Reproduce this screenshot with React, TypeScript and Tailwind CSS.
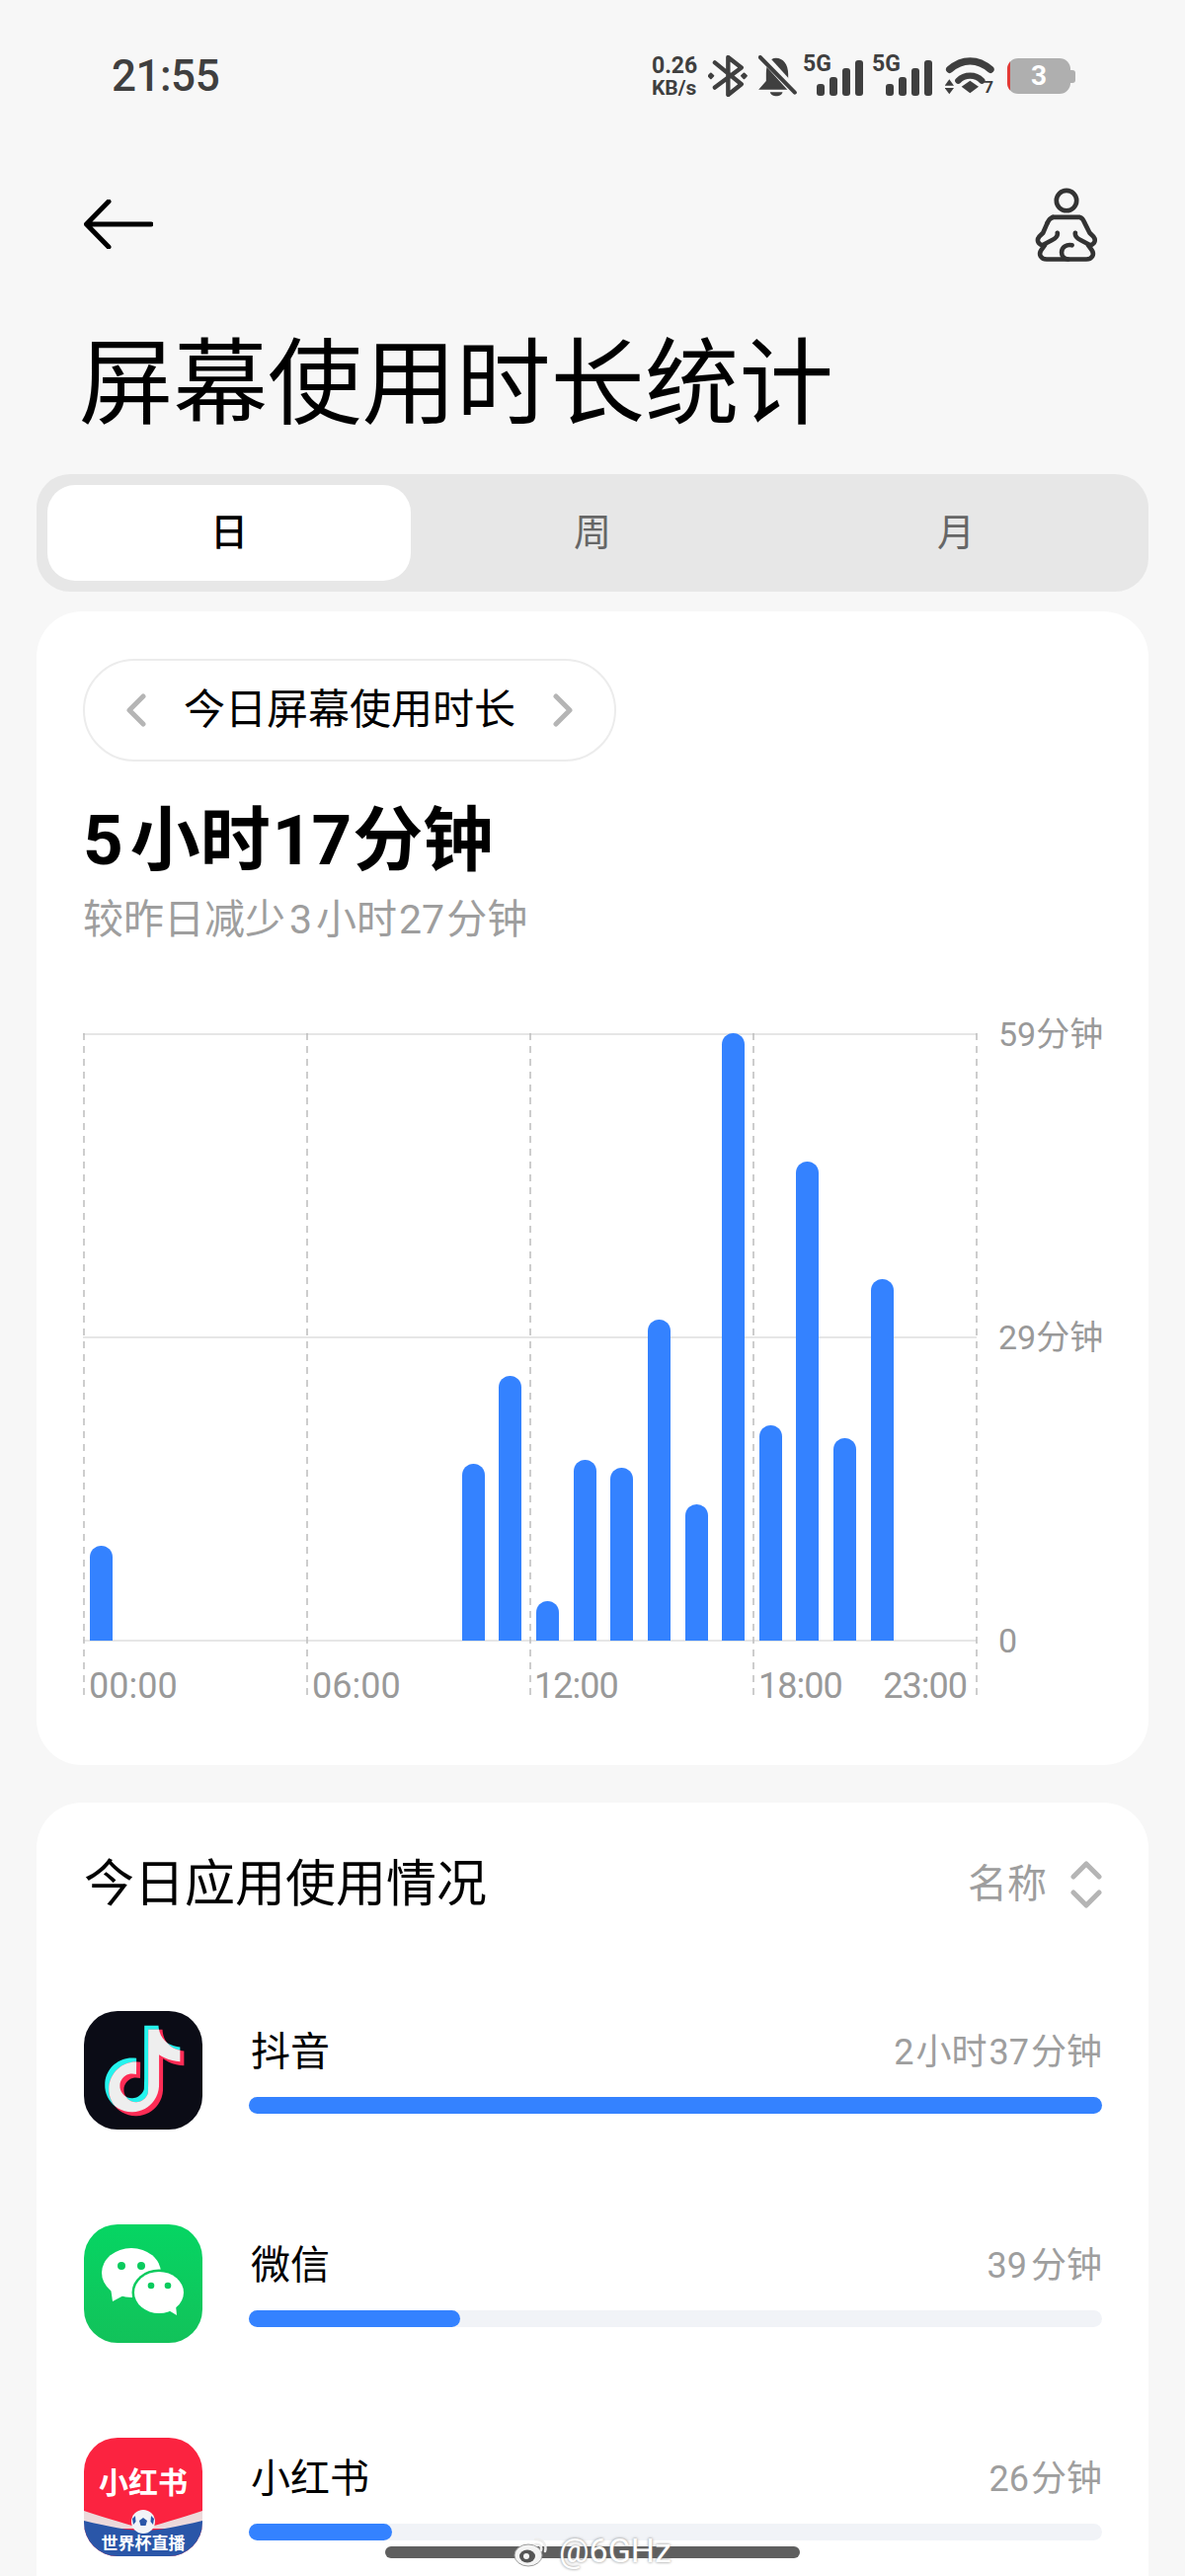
const hourHeights = [96, 0, 0, 0, 0, 0, 0, 0, 0, 0, 179, 268, 40, 183, 175, 325, 138, 615, 218, 485, 205, 366, 0, 0];

const TIKTOK =
  "M12.525.02c1.31-.02 2.61-.01 3.91-.02.08 1.53.63 3.09 1.75 4.17 1.12 1.11 2.7 1.62 4.24 1.79v4.03c-1.44-.05-2.89-.35-4.2-.97-.57-.26-1.1-.59-1.62-.93-.01 2.92.01 5.84-.02 8.75-.08 1.4-.54 2.79-1.35 3.94-1.31 1.92-3.58 3.17-5.91 3.21-1.43.08-2.86-.31-4.08-1.03-2.02-1.19-3.44-3.37-3.65-5.71-.02-.5-.03-1-.01-1.49.18-1.9 1.12-3.72 2.58-4.96 1.66-1.44 3.98-2.13 6.15-1.72.02 1.48-.04 2.96-.04 4.44-.99-.32-2.15-.23-3.02.37-.63.41-1.11 1.04-1.36 1.75-.21.51-.15 1.07-.14 1.61.24 1.64 1.82 3.02 3.5 2.87 1.12-.01 2.19-.66 2.77-1.61.19-.33.4-.67.41-1.06.1-1.79.06-3.57.07-5.36.01-4.03-.01-8.05.02-12.07z";

function Signal() {
  return (
    <div className="flex items-end gap-[5px] h-[36px] ml-[2px]">
      <div className="w-[8px] h-[12px] rounded-[3px] bg-[#3f3f3f]" />
      <div className="w-[8px] h-[19px] rounded-[3px] bg-[#3f3f3f]" />
      <div className="w-[8px] h-[28px] rounded-[3px] bg-[#3f3f3f]" />
      <div className="w-[8px] h-[36px] rounded-[3px] bg-[#3f3f3f]" />
    </div>
  );
}

function Net5G({ className }: { className: string }) {
  return (
    <div className={`relative w-[61px] h-[41px] ${className}`}>
      <div className="absolute left-0 top-[1px] text-[23px] leading-[16px] font-bold text-[#3f3f3f]">5G</div>
      <div className="absolute right-0 bottom-0">
        <Signal />
      </div>
    </div>
  );
}

function StatusBar() {
  return (
    <div className="flex items-center h-[90px] pl-[113px]">
      <div className="text-[44px] leading-[44px] font-medium text-[#3f3f3f] tracking-[-0.5px]">21:55</div>
      <div className="flex items-center ml-auto mr-[111px]">
        <div className="font-bold text-[#3f3f3f] w-[47px]">
          <div className="text-[23px] leading-[23px]">0.26</div>
          <div className="text-[21px] leading-[22px]">KB/s</div>
        </div>
        <svg className="ml-[10px]" width="40" height="42" viewBox="352 78 118 125" fill="none">
          <path d="M372 100L452 165L412 197V84L452 115L372 175" stroke="#3f3f3f" strokeWidth="13" strokeLinejoin="round" strokeLinecap="round" />
          <rect x="352" y="132" width="16" height="16" rx="3" transform="rotate(45 360 140)" fill="#3f3f3f" />
          <rect x="452" y="132" width="16" height="16" rx="3" transform="rotate(45 460 140)" fill="#3f3f3f" />
        </svg>
        <svg className="ml-[11px]" width="39" height="42" viewBox="505 72 116 126" fill="none">
          <path d="M558 80C580 80 595 100 595 128V150L612 176H505L528 150V128C528 100 538 80 558 80Z" fill="#3f3f3f" />
          <path d="M540 184H578C575 200 543 200 540 184Z" fill="#3f3f3f" />
          <path d="M510 66L624 192" stroke="#f7f7f7" strokeWidth="26" />
          <path d="M510 78L615 185" stroke="#3f3f3f" strokeWidth="12" strokeLinecap="round" />
        </svg>
        <Net5G className="ml-[6px] -mt-[1px]" />
        <Net5G className="ml-[9px] -mt-[1px]" />
        <div className="relative w-[50px] h-[38px] ml-[13px]">
          <svg className="absolute left-0 top-0" width="50" height="38" viewBox="1070 85 150 114" fill="none">
            <path d="M1084 122C1122 88 1170 88 1208 122" stroke="#3f3f3f" strokeWidth="22" strokeLinecap="round" />
            <path d="M1110 156C1130 136 1162 136 1182 156" stroke="#3f3f3f" strokeWidth="19" strokeLinecap="round" />
            <path d="M1146 156L1172 174L1146 194L1120 174Z" fill="#3f3f3f" />
            <path d="M1083 152L1097 171H1069Z" fill="#3f3f3f" />
            <path d="M1083 197L1097 178H1069Z" fill="#3f3f3f" />
          </svg>
          <span className="absolute right-[1px] -bottom-[1px] text-[17px] leading-[17px] font-bold text-[#3f3f3f]">7</span>
        </div>
        <div className="flex items-center ml-[13px]">
          <div className="relative w-[64px] h-[36px] rounded-[11px] bg-[#afafaf] overflow-hidden flex items-center justify-center">
            <div className="absolute left-0 top-0 bottom-0 w-[3px] bg-[#e53935]" />
            <span className="text-[28px] leading-[36px] font-bold text-white">3</span>
          </div>
          <div className="w-[5px] h-[13px] rounded-r-[3px] bg-[#afafaf]" />
        </div>
      </div>
    </div>
  );
}

function Header() {
  return (
    <div className="flex items-center justify-between h-[76px] mt-[67px] pl-[85px] pr-[88px]">
      <svg width="70" height="50" viewBox="0 0 70 50" fill="none">
        <path d="M68 25H3M25 2L2.5 25L25 48" stroke="#000" strokeWidth="5" strokeLinecap="round" strokeLinejoin="round" />
      </svg>
      <svg width="64" height="75" viewBox="1342 478 194 226" fill="none" stroke="#333" strokeWidth="14" strokeLinecap="round" strokeLinejoin="round">
        <circle cx="1439" cy="517" r="31" />
        <path d="M1397 568H1480C1488 570 1492 578 1495 586L1510 616L1522 628C1530 638 1526 650 1512 654L1482 638C1470 632 1464 626 1466 616" />
        <path d="M1380 586C1384 576 1390 570 1397 568" />
        <path d="M1380 586L1367 616L1355 628C1347 638 1351 650 1365 654L1395 638C1407 632 1413 626 1411 616" />
        <path d="M1372 654L1362 668C1352 682 1360 697 1378 697H1500C1518 697 1526 682 1516 668L1506 654" />
        <path d="M1456 654C1440 650 1424 660 1424 676C1424 688 1432 696 1444 697" />
      </svg>
    </div>
  );
}

function Tabs() {
  return (
    <div className="flex mx-[37px] mt-[36px] h-[119px] p-[11px] rounded-[34px] bg-[#e7e7e7]">
      <div className="flex-1 flex items-center justify-center rounded-[28px] bg-white text-[38px] font-medium text-black">日</div>
      <div className="flex-1 flex items-center justify-center text-[38px] text-[#666]">周</div>
      <div className="flex-1 flex items-center justify-center text-[38px] text-[#666]">月</div>
    </div>
  );
}

function Chart() {
  return (
    <div className="flex mt-[90px]">
      <div className="relative w-[906px] h-[675px]">
        <svg className="absolute left-0 top-0" width="906" height="675" fill="none">
          {[1, 308, 615].map((y) => (
            <line key={y} x1="0" x2="905" y1={y} y2={y} stroke="#e6e6e6" strokeWidth="2" />
          ))}
          {[1, 227, 453, 679, 905].map((x) => (
            <line key={x} x1={x} x2={x} y1="0" y2="675" stroke="#bdbdbd" strokeWidth="1.5" strokeDasharray="7 6" />
          ))}
        </svg>
        <div className="relative grid grid-cols-[repeat(24,37.67px)] items-end h-[615px] pl-[7px]">
          {hourHeights.map((h, i) => (
            <div key={i} className="w-[23px] rounded-t-full bg-[#3482ff]" style={{ height: h }} />
          ))}
        </div>
        <div className="relative flex h-[60px] pt-[32px] items-center text-[36px] leading-[40px] text-[#999]">
          <div className="w-[226px] pl-[6px]">00:00</div>
          <div className="w-[226px] pl-[6px]">06:00</div>
          <div className="w-[226px] pl-[5px] tracking-[-1px]">12:00</div>
          <div className="w-[226px] pl-[6px] flex justify-between pr-[9px] tracking-[-1px]">
            <span>18:00</span>
            <span>23:00</span>
          </div>
        </div>
      </div>
      <div className="flex flex-col justify-between h-[614px] mt-[1px] ml-[21px] text-[34px] text-[#999]">
        <div className="h-0 flex items-center">59分钟</div>
        <div className="h-0 flex items-center">29分钟</div>
        <div className="h-0 flex items-center">0</div>
      </div>
    </div>
  );
}

function UsageCard() {
  return (
    <div className="mx-[37px] mt-[20px] h-[1168px] rounded-[46px] bg-white pt-[48px] pl-[47px]">
      <div className="flex items-center justify-between w-[540px] h-[104px] rounded-full border-2 border-[#ececec] pl-[42px] pr-[42px]">
        <svg width="20" height="34" viewBox="0 0 20 34" fill="none">
          <path d="M17 3L3 17L17 31" stroke="#b5b5b5" strokeWidth="5" strokeLinecap="round" strokeLinejoin="round" />
        </svg>
        <span className="text-[42px] leading-[50px] text-black">今日屏幕使用时长</span>
        <svg width="20" height="34" viewBox="0 0 20 34" fill="none">
          <path d="M3 3L17 17L3 31" stroke="#b5b5b5" strokeWidth="5" strokeLinecap="round" strokeLinejoin="round" />
        </svg>
      </div>
      <div className="flex items-center h-[80px] mt-[40px] text-[71px] leading-[80px] font-bold text-black">
        <span className="pr-[7px]">5</span>
        <span>小时</span>
        <span className="px-[2px] tracking-[-1px]">17</span>
        <span>分钟</span>
      </div>
      <div className="flex items-center h-[50px] mt-[15px] text-[41px] leading-[50px] text-[#9e9e9e]">
        <span>较昨日减少</span>
        <span className="px-[4px]">3</span>
        <span>小时</span>
        <span className="px-[2px]">27</span>
        <span>分钟</span>
      </div>
      <Chart />
    </div>
  );
}

function DouyinIcon() {
  return (
    <svg width="120" height="120" viewBox="0 0 120 120">
      <defs>
        <clipPath id="tk-red">
          <path d={TIKTOK} transform="translate(0.55 0.55)" />
        </clipPath>
      </defs>
      <rect width="120" height="120" fill="#0b0c16" />
      <g transform="translate(17.5 16.7) scale(3.65)">
        <path d={TIKTOK} fill="#25f4ee" transform="translate(-0.55 -0.55)" />
        <path d={TIKTOK} fill="#fe2c55" transform="translate(0.55 0.55)" />
        <g clipPath="url(#tk-red)">
          <path d={TIKTOK} fill="#eeeeee" transform="translate(-0.55 -0.55)" />
        </g>
      </g>
    </svg>
  );
}

function WechatIcon() {
  return (
    <svg width="120" height="120" viewBox="0 0 120 120">
      <defs>
        <linearGradient id="wx-bg" x1="0" y1="0" x2="0" y2="1">
          <stop offset="0" stopColor="#06d563" />
          <stop offset="1" stopColor="#12c25a" />
        </linearGradient>
      </defs>
      <rect width="120" height="120" fill="url(#wx-bg)" />
      <ellipse cx="48" cy="49" rx="30" ry="25" fill="#fff" />
      <path d="M27 64L29 78L42 71Z" fill="#fff" />
      <ellipse cx="76" cy="69" rx="27.5" ry="23.5" fill="#0acb5e" />
      <ellipse cx="76" cy="69" rx="25" ry="21" fill="#fff" />
      <path d="M84 86L94 92L93 82Z" fill="#fff" />
      <circle cx="38" cy="42" r="4" fill="#0acb5e" />
      <circle cx="58" cy="42" r="4" fill="#0acb5e" />
      <circle cx="68" cy="62" r="3.3" fill="#0acb5e" />
      <circle cx="85" cy="62" r="3.3" fill="#0acb5e" />
    </svg>
  );
}

function RedbookIcon() {
  const cjk = "Noto Sans CJK SC, sans-serif";
  return (
    <svg width="120" height="120" viewBox="0 0 120 120">
      <rect width="120" height="120" fill="#fb2340" />
      <path d="M0 74C25 82 45 88 60 92C75 88 95 82 120 74V92H0Z" fill="#ecd9db" />
      <path d="M0 84C25 90 45 94 60 94C75 94 95 90 120 84V120H0Z" fill="#2a56a8" />
      <circle cx="60" cy="85" r="12" fill="#f2f4f8" />
      <path d="M60 81L64 84L62.5 89H57.5L56 84Z" fill="#2a56a8" />
      <path d="M49 82L52 79L52.5 85L50 88Z" fill="#2a56a8" />
      <path d="M71 82L68 79L67.5 85L70 88Z" fill="#2a56a8" />
      <text x="60" y="56" textAnchor="middle" fontFamily={cjk} fontWeight="700" fontSize="30" fill="#fff">小红书</text>
      <text x="60" y="113" textAnchor="middle" fontFamily={cjk} fontWeight="700" fontSize="17" fill="#fff">世界杯直播</text>
    </svg>
  );
}

function AppRow({ icon, name, time, width }: { icon: React.ReactNode; name: string; time: React.ReactNode; width: number }) {
  return (
    <div className="flex h-[120px] mb-[96px]">
      <div className="w-[120px] h-[120px] rounded-[34px] overflow-hidden shrink-0">{icon}</div>
      <div className="flex-1 ml-[47px]">
        <div className="flex items-center justify-between h-[50px] mt-[17px] pl-[2px]">
          <span className="text-[40px] leading-[50px] text-black">{name}</span>
          <span className="flex items-center text-[36px] leading-[50px] text-[#9e9e9e]">{time}</span>
        </div>
        <div className="h-[17px] mt-[20px] rounded-full bg-[#f1f3f7]">
          <div className="h-[17px] rounded-full bg-[#3482ff]" style={{ width }} />
        </div>
      </div>
    </div>
  );
}

function AppsCard() {
  return (
    <div className="mx-[37px] mt-[38px] h-[783px] overflow-hidden rounded-t-[46px] bg-white pt-[53px] pl-[48px] pr-[47px]">
      <div className="flex items-center justify-between h-[60px]">
        <span className="text-[51px] leading-[60px] text-black">今日应用使用情况</span>
        <div className="flex items-center">
          <span className="text-[40px] leading-[60px] text-[#9e9e9e]">名称</span>
          <svg className="ml-[24px]" width="32" height="48" viewBox="0 0 32 48" fill="none">
            <path d="M3 16L16 3L29 16M3 32L16 45L29 32" stroke="#b5b5b5" strokeWidth="5" strokeLinecap="round" strokeLinejoin="round" />
          </svg>
        </div>
      </div>
      <div className="mt-[98px]">
        <AppRow icon={<DouyinIcon />} name="抖音" width={864} time={<><span className="pr-[2px]">2</span>小时<span className="px-[2px]">37</span>分钟</>} />
        <AppRow icon={<WechatIcon />} name="微信" width={214} time={<><span className="pr-[4px]">39</span>分钟</>} />
        <AppRow icon={<RedbookIcon />} name="小红书" width={145} time={<><span className="pr-[2px]">26</span>分钟</>} />
      </div>
    </div>
  );
}

export default function App() {
  return (
    <div className="relative h-[2608px] w-[1200px] overflow-hidden bg-[#f7f7f7] pt-[32px] [font-family:Roboto,'Noto_Sans_CJK_SC',sans-serif]">
      <StatusBar />
      <Header />
      <h1 className="mt-[69px] pl-[80px] text-[95.5px] leading-[110px] font-normal text-black">屏幕使用时长统计</h1>
      <Tabs />
      <UsageCard />
      <AppsCard />

      {/* gesture bar and the weibo watermark lie over the page */}
      <div className="absolute left-[390px] top-[2578px] w-[420px] h-[12px] rounded-full bg-[#5f5f5f]" />
      <div className="absolute left-[520px] top-[2564px] flex items-center h-[36px] text-[34px] leading-[36px] text-white [text-shadow:0_0_3px_#777]">
        <svg width="36" height="36" viewBox="0 0 36 36" fill="none">
          <ellipse cx="15" cy="23" rx="14" ry="11" fill="#f4f4f4" stroke="#9a9a9a" strokeWidth="1" />
          <ellipse cx="14" cy="24" rx="8" ry="6.5" fill="#555" />
          <circle cx="13" cy="24" r="3" fill="#f4f4f4" />
          <path d="M22 7C29 6 34 12 32 19M22 12C26 11 29 14 28 18" stroke="#ededed" strokeWidth="2.5" strokeLinecap="round" />
        </svg>
        <span className="ml-[10px]">@6GHz</span>
      </div>
    </div>
  );
}
